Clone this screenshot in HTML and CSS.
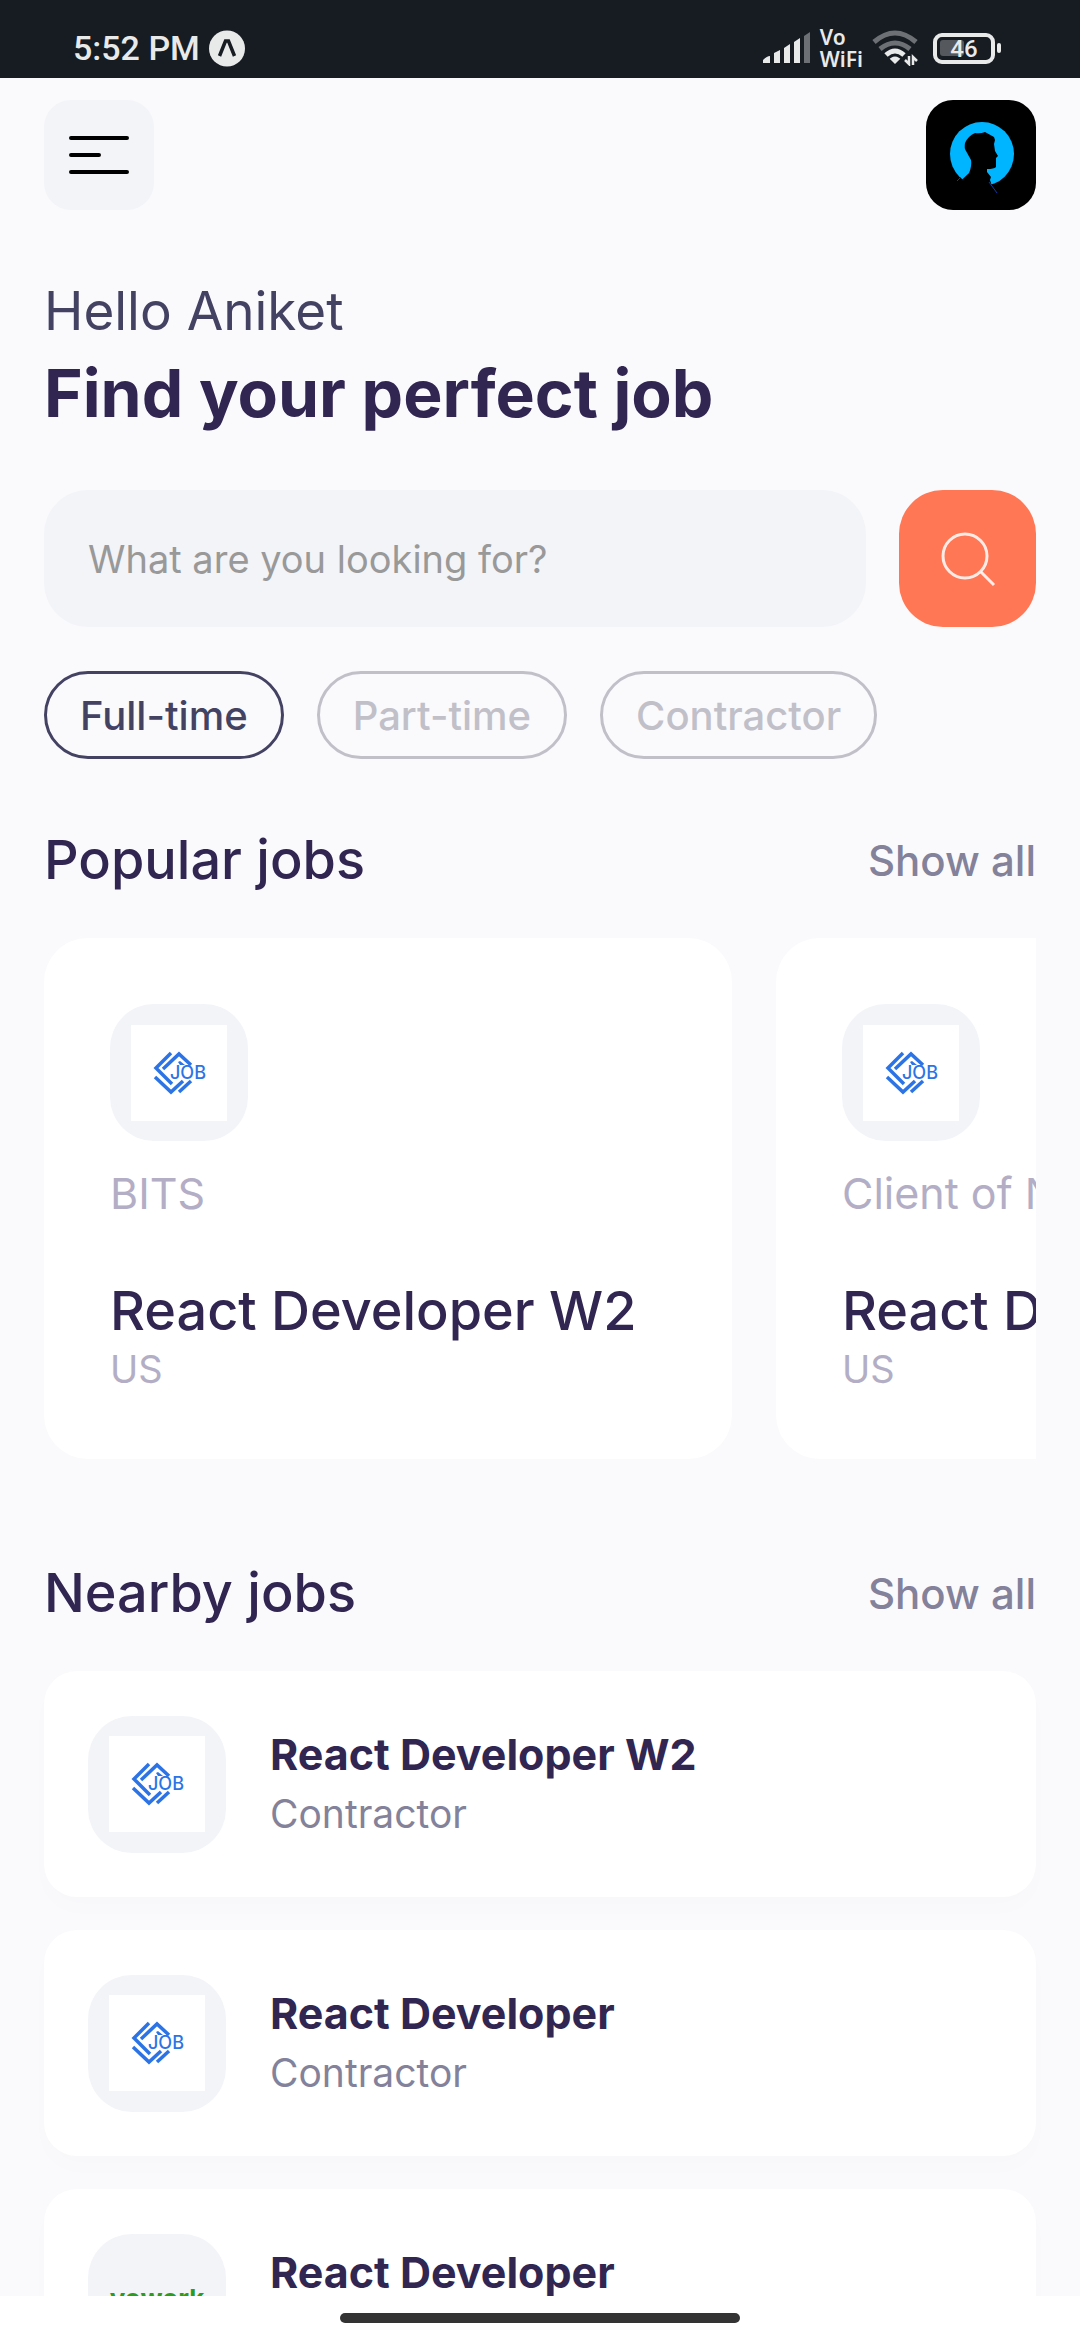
FILE: index.html
```html
<!DOCTYPE html>
<html lang="en">
<head>
<meta charset="utf-8">
<meta name="viewport" content="width=device-width, initial-scale=1">
<title>Find your perfect job</title>
<link rel="stylesheet" href="styles.css">
</head>
<body>
<svg class="defs" width="0" height="0" aria-hidden="true">
  <symbol id="job-logo" viewBox="0 0 96 96">
    <rect width="96" height="96" fill="#fff"/>
    <g fill="none" stroke="#2c74e6" stroke-width="3.500">
      <path d="M40 28 25 43 41 59"/>
      <path d="M32 44 48 29 60 40"/>
      <path d="M24 52 40 67 52 56"/>
      <path d="M48 67 60 56"/>
    </g>
    <path d="M47 37l2-1 5 4h-5z" fill="#2c74e6"/>
    <text x="39" y="54" class="logo-text">JOB</text>
  </symbol>
</svg>
<div class="app">
  <div class="status">
    <div class="status-side">
      <span class="clock">5:52 PM</span>
      <svg width="36" height="37" viewBox="0 0 36 37"><circle cx="18" cy="18.500" r="18" fill="#e8eaea"/><path d="M10.500 26 16.500 11h3l6 15" fill="none" stroke="#171b22" stroke-width="3.500"/></svg>
    </div>
    <div class="status-side">
      <svg width="48" height="32" viewBox="0 0 48 32" fill="#e8eaea"><path d="M0 31v-3q4-4 7-4v7zM11 31V21l6-3v13zM21 31V16l6-4v19zM31 31V10l6-4v25z"/><path d="M41 31V4l6-4v31z" fill="#6d7176"/></svg>
      <span class="vowifi"><span>Vo</span><span>WiFi</span></span>
      <svg width="46" height="36" viewBox="0 0 46 36" fill="none" stroke="#6d7176" stroke-width="5"><path d="M2 12q21-18 42 0M8 19q15-12 30 0"/><path d="M14 25q9-8 18 0" stroke="#e8eaea"/><path d="M20 29q3-2 6 0l-3 3z" fill="#e8eaea" stroke="#e8eaea" stroke-width="3"/><path d="M37 26v8l-4-4M41 35v-8l4 4" stroke="#e8eaea" stroke-width="2.500"/></svg>
      <span class="battery"><svg width="69" height="31" viewBox="0 0 69 31"><rect x="2" y="2" width="58" height="27" rx="7" fill="none" stroke="#e8eaea" stroke-width="4"/><rect x="7" y="7" width="24" height="16" rx="3" fill="#55595e"/><rect x="64" y="10" width="4" height="10" rx="2" fill="#e8eaea"/></svg><span class="battery-level">46</span></span>
    </div>
  </div>

  <header class="header">
    <button class="square menu" aria-label="Menu"><svg width="62" height="40" viewBox="0 0 62 40" stroke="#000" stroke-width="4" stroke-linecap="round"><path d="M3 3h56M3 20h28M3 37h56"/></svg></button>
    <button class="square avatar" aria-label="Profile">
      <svg width="110" height="110" viewBox="0 0 110 110"><circle cx="56" cy="54" r="32" fill="#00b5ff"/><path d="M25 90 43 73Q46 66 45 60L40 51Q38 48 39 43 42 36 49 33 54 34 59 32L68 37 69 40 68 44 69 51 72 56 70 58 70 67Q68 69 61 69V72L65 77 64 80 66 86V92z"/><path d="m31 81 4-4M63 82l8 11" stroke="#0b3da8" fill="none"/></svg>
    </button>
  </header>

  <main class="content">
    <p class="hello">Hello Aniket</p>
    <h1 class="headline">Find your perfect job</h1>

    <form class="search">
      <input class="search-box" type="text" placeholder="What are you looking for?" aria-label="What are you looking for?">
      <button class="search-button" type="button" aria-label="Search"><svg width="56" height="56" viewBox="0 0 56 56" fill="none" stroke="#fff" stroke-opacity=".85" stroke-width="3"><circle cx="25" cy="25" r="22"/><path d="m41 41 13 13"/></svg></button>
    </form>

    <div class="tabs">
      <button class="tab tab-active">Full-time</button>
      <button class="tab">Part-time</button>
      <button class="tab">Contractor</button>
    </div>

    <section class="section">
      <div class="section-head"><h2 class="section-title">Popular jobs</h2><a class="show-all" href="#popular">Show all</a></div>
      <div class="cards" id="popular">
        <article class="card">
          <div class="tile"><svg class="logo"><use href="#job-logo"/></svg></div>
          <p class="company">BITS</p>
          <h3 class="job-title">React Developer W2</h3>
          <p class="place">US</p>
        </article>
        <article class="card">
          <div class="tile"><svg class="logo"><use href="#job-logo"/></svg></div>
          <p class="company">Client of N</p>
          <h3 class="job-title">React Developer</h3>
          <p class="place">US</p>
        </article>
      </div>
    </section>

    <section class="section nearby">
      <div class="section-head"><h2 class="section-title">Nearby jobs</h2><a class="show-all" href="#nearby">Show all</a></div>
      <div class="rows" id="nearby">
        <article class="row">
          <div class="tile"><svg class="logo"><use href="#job-logo"/></svg></div>
          <div><h3 class="row-title">React Developer W2</h3><p class="row-type">Contractor</p></div>
        </article>
        <article class="row">
          <div class="tile"><svg class="logo"><use href="#job-logo"/></svg></div>
          <div><h3 class="row-title">React Developer</h3><p class="row-type">Contractor</p></div>
        </article>
        <article class="row">
          <div class="tile"><span class="vowork">vowork</span></div>
          <div><h3 class="row-title">React Developer</h3><p class="row-type">Contractor</p></div>
        </article>
      </div>
    </section>
  </main>
  <footer class="home"><span class="home-bar"></span></footer>
</div>
</body>
</html>
```
FILE: styles.css
```css
* { box-sizing: border-box; }
body { margin: 0; background: #fafafd; font-family: Inter, "Liberation Sans", sans-serif; color: #312651; }
p, h1, h2, h3 { margin: 0; }
button, input { font: inherit; border: 0; padding: 0; }
svg { display: block; flex: none; }
.defs { position: absolute; }
.logo-text { font-size: 18px; font-weight: 500; fill: #2c74e6; }

.app { display: flex; flex-direction: column; height: 100vh; }

.status { flex: none; display: flex; justify-content: space-between; align-items: center; height: 78px; padding: 18px 78px 0 73px; background: #171b22; color: #e8eaea; font-family: Roboto, sans-serif; }
.status-side { display: flex; align-items: center; gap: 9px; }
.clock { font-size: 34px; font-weight: 500; line-height: 40px; }
.vowifi { display: flex; flex-direction: column; font-family: "Noto Sans", sans-serif; font-size: 21px; font-weight: 600; line-height: 22px; }
.battery { position: relative; margin-left: 6px; }
.battery-level { position: absolute; inset: 0 7px 0 0; text-align: center; font-size: 24px; font-weight: 500; line-height: 32px; }

.header { flex: none; display: flex; justify-content: space-between; padding: 22px 44px; }
.square { display: grid; place-items: center; width: 110px; height: 110px; border-radius: 27px; overflow: hidden; }
.menu { background: #f3f4f8; }
.avatar { background: #000; }

.content { flex: 1; min-height: 0; overflow: hidden; padding: 44px 44px 0; }
.hello { font-size: 53px; line-height: 70px; color: #444262; }
.headline { font-size: 66px; font-weight: 700; line-height: 94px; }

.search { display: flex; gap: 33px; margin-top: 50px; }
.search-box { flex: 1; min-width: 0; height: 137px; padding: 0 44px; border-radius: 44px; background: #f3f4f8; font-size: 38px; color: #312651; }
.search-box::placeholder { color: #999; opacity: 1; }
.search-button { display: grid; place-items: center; width: 137px; height: 137px; border-radius: 44px; background: #ff7754; }

.tabs { display: flex; gap: 33px; margin-top: 44px; }
.tab { height: 88px; padding: 0 33px; border: 3px solid #c1c0c8; border-radius: 44px; background: none; color: #c1c0c8; font-size: 40px; font-weight: 500; }
.tab-active { border-color: #444262; color: #444262; }

.section { margin-top: 66px; }
.nearby { margin-top: 99px; }
.section-head { display: flex; justify-content: space-between; align-items: center; margin-bottom: 43px; }
.section-title { font-size: 54px; font-weight: 500; line-height: 70px; }
.show-all { color: #83829a; font-size: 42px; font-weight: 500; text-decoration: none; }

.cards { display: flex; gap: 44px; overflow: hidden; }
.card { flex: none; width: 688px; padding: 66px; border-radius: 44px; background: #fff; white-space: nowrap; }
.tile { flex: none; display: grid; place-items: center; width: 138px; height: 137px; border-radius: 44px; background: #f3f4f8; }
.logo { width: 96px; height: 96px; }
.company { margin-top: 23px; font-size: 43px; line-height: 58px; color: #b3aec6; }
.job-title { margin-top: 54px; font-size: 54px; font-weight: 500; line-height: 70px; }
.place { font-size: 38px; line-height: 47px; color: #b3aec6; }

.rows { display: flex; flex-direction: column; gap: 33px; }
.row { display: flex; align-items: center; gap: 44px; min-height: 226px; padding: 44px; border-radius: 33px; background: #fff; box-shadow: 0 12px 24px rgba(60, 60, 90, .01); }
.row-title { font-size: 43px; font-weight: 700; line-height: 60px; }
.row-type { font-size: 39px; line-height: 60px; color: #83829a; }
.vowork { display: block; padding-bottom: 6px; font-size: 26px; font-weight: 700; line-height: 32px; color: #2a9d1c; }

.home { flex: none; display: flex; justify-content: center; height: 44px; padding-top: 17px; background: #fff; }
.home-bar { width: 400px; height: 10px; border-radius: 5px; background: #333; }
```
